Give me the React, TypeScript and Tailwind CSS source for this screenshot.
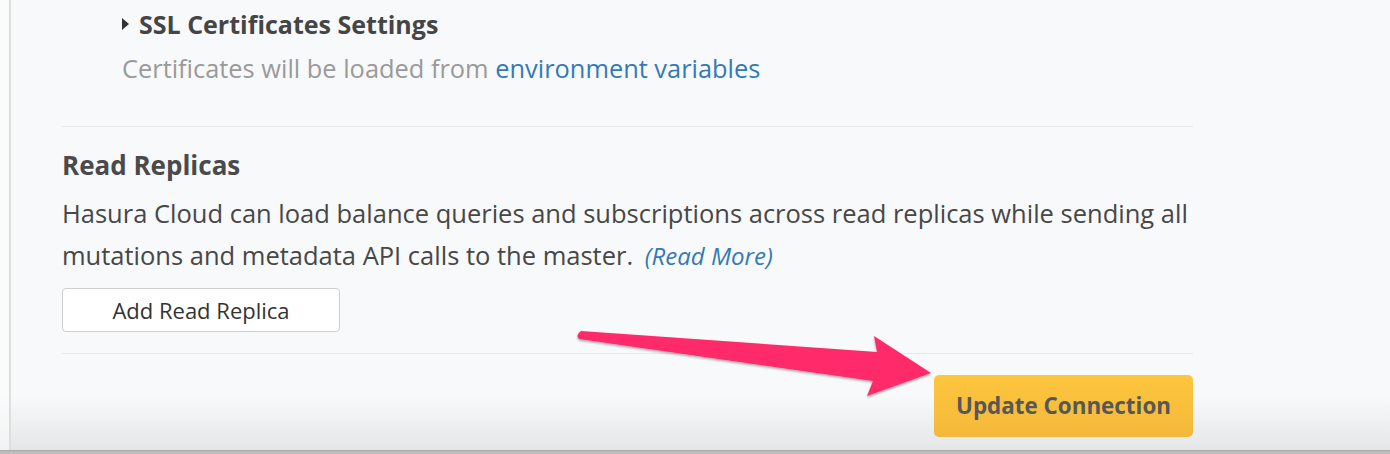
import React from "react";

const FONT = { fontFamily: "'Open Sans', 'Noto Sans', sans-serif" };

function Arrow() {
  return (
    <svg
      className="pointer-events-none absolute left-0 top-0"
      width={1390}
      height={454}
      viewBox="0 0 1390 454"
      aria-hidden
    >
      <defs>
        <filter id="arrow-shadow" x="-10%" y="-50%" width="120%" height="200%">
          <feDropShadow dx="0" dy="1.5" stdDeviation="1.2" floodColor="#000" floodOpacity="0.35" />
        </filter>
      </defs>
      <path
        d="M581 331 L877 352 L874 336 L931 373 L867 396 L873 381 L579 339 Q575 335 581 331 Z"
        fill="#ff2b69"
        filter="url(#arrow-shadow)"
      />
    </svg>
  );
}

export default function App() {
  return (
    <div className="relative flex h-[454px] w-[1390px] flex-col overflow-hidden" style={FONT}>
      <div className="flex flex-1 bg-linear-to-b from-[#f8f9fb] from-[88%] to-[#e5e6e8]">
        <div className="w-[9px] bg-[#fbfbfb]/60" />
        <div className="w-[2px] bg-[#dedede]" />

        <div className="ml-[51px] flex w-[1131px] flex-col">
          {/* SSL settings */}
          <div className="mt-[8px] pl-[60px]">
            <div className="flex items-center gap-[10px] text-[25px] leading-[32px] font-bold text-[#454545]">
              <span className="h-0 w-0 border-y-[6px] border-l-[7px] border-y-transparent border-l-[#333]" />
              SSL Certificates Settings
            </div>
            <p className="mt-[12px] text-[25.4px] leading-[32px] text-[#9a9a9a]">
              Certificates will be loaded from{" "}
              <a className="text-[#337ab7]">environment variables</a>
            </p>
          </div>

          <hr className="mt-[42px] border-t-[1.5px] border-[#e8e9eb]" />

          {/* Read replicas */}
          <h3 className="mt-[22px] text-[26px] leading-[32px] font-bold text-[#4a4a4a]">Read Replicas</h3>
          <p className="mt-[11px] text-[25.5px] leading-[42px] text-[#474747]">
            Hasura Cloud can load balance queries and subscriptions across read replicas while sending all
            <br />
            mutations and metadata API calls to the master.{" "}
            <a className="ml-[5px] text-[24px] italic text-[#337ab7]">(Read More)</a>
          </p>
          <div className="mt-[11px]">
            <button className="h-[44px] w-[278px] rounded-[4px] border-[1.5px] border-[#cfcfcf] bg-white text-[22px] text-[#333]">
              Add Read Replica
            </button>
          </div>

          <hr className="mt-[21px] border-t-[1.5px] border-[#e8e9eb]" />

          <div className="mt-[21px] flex justify-end">
            <button className="h-[62px] w-[259px] rounded-[5px] bg-linear-to-b from-[#fec63e] to-[#f3b83a] text-[22.4px] font-bold text-[#575757]">
              Update Connection
            </button>
          </div>
        </div>
      </div>
      <div className="h-[4px] border-t border-[#a9a9a9] bg-[#bdbdbd]" />

      <Arrow />
    </div>
  );
}
